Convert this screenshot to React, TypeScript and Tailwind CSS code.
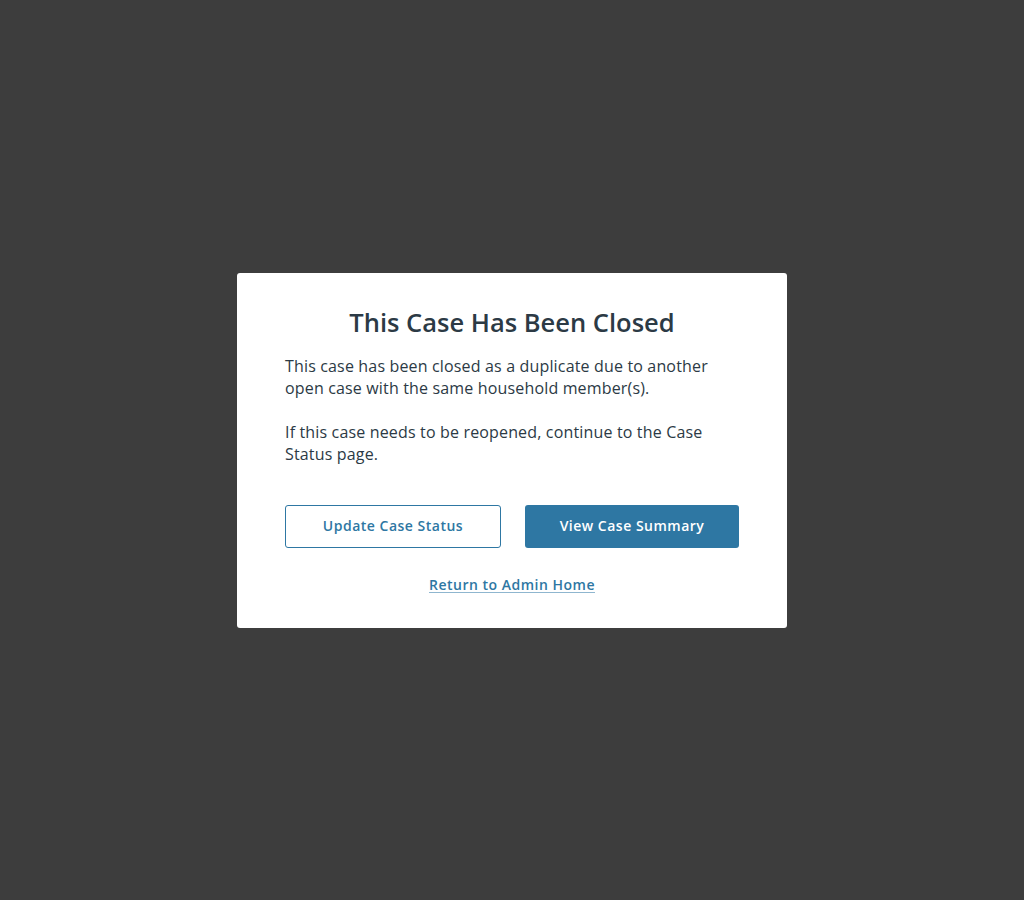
export default function App() {
  return (
    <div
      className="flex min-h-[900px] w-full items-center justify-center bg-[#3d3d3d]"
      style={{ fontFamily: '"Open Sans", "Noto Sans", sans-serif' }}
    >
      <div className="w-[550px] rounded-[3px] bg-white px-12 pt-[34px] pb-[32px] text-[#2c3a45]">
        <h1 className="text-center text-[25.5px] leading-[31px] font-semibold">This Case Has Been Closed</h1>
        <div className="mt-[17px] text-base leading-[22px] tracking-[0.16px]">
          <p>This case has been closed as a duplicate due to another open case with the same household member(s).</p>
          <p className="mt-[22px]">If this case needs to be reopened, continue to the Case Status page.</p>
        </div>
        <div className="mt-10 flex gap-6">
          <button
            type="button"
            className="h-[43px] flex-1 rounded-[3px] border border-[#2e77a3] bg-white text-sm font-semibold tracking-[0.5px] text-[#2e77a3]"
          >
            Update Case Status
          </button>
          <button
            type="button"
            className="h-[43px] flex-1 rounded-[3px] bg-[#2e77a3] text-sm font-semibold tracking-[0.5px] text-white"
          >
            View Case Summary
          </button>
        </div>
        <div className="mt-6 text-center">
          <a
            href="#"
            className="text-sm leading-5 font-semibold tracking-[0.5px] text-[#2e77a3] underline decoration-[#8fb6cf] underline-offset-2"
          >
            Return to Admin Home
          </a>
        </div>
      </div>
    </div>
  );
}
